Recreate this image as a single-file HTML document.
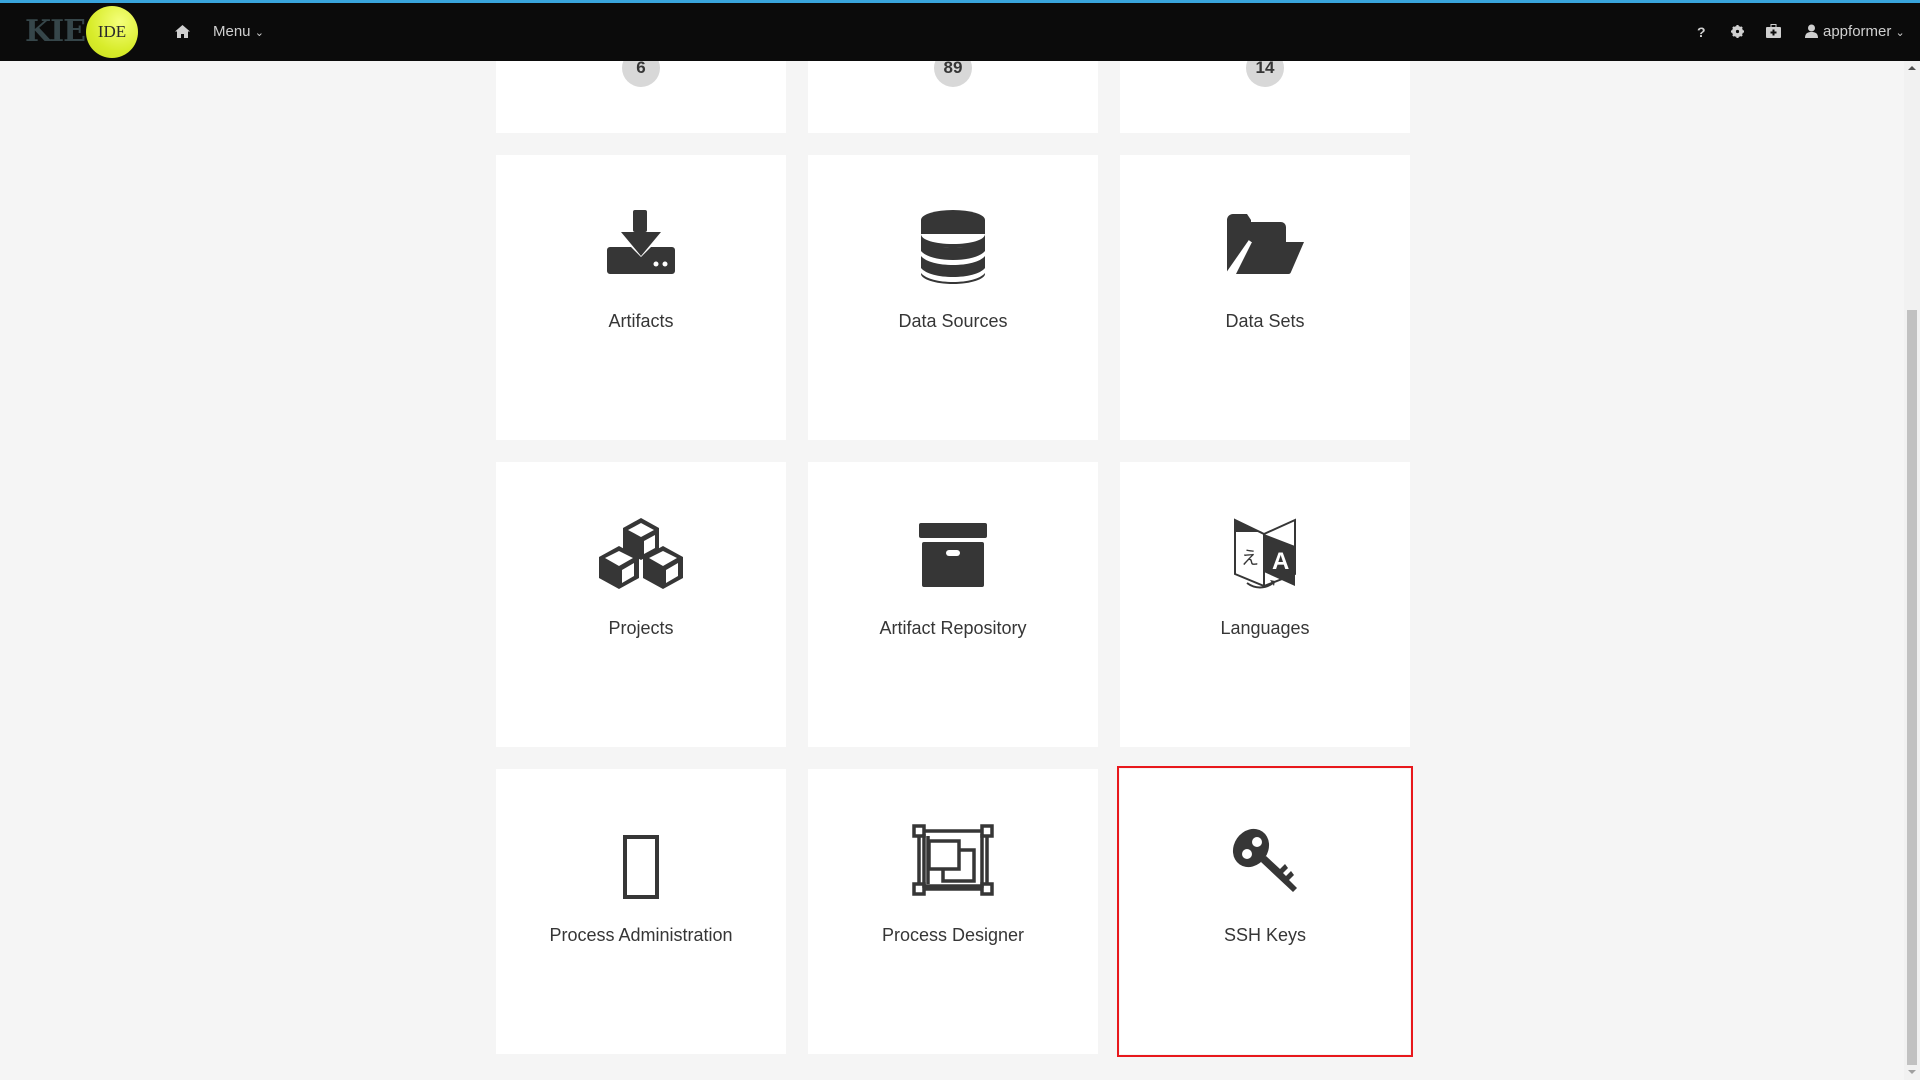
<!DOCTYPE html>
<html><head><meta charset="utf-8"><style>
*{margin:0;padding:0;box-sizing:border-box}
body{width:1920px;height:1080px;overflow:hidden;background:#f5f5f5;font-family:"Liberation Sans",sans-serif;position:relative}
.top{position:absolute;left:0;top:0;width:1920px;height:3px;background:#39a5dc;z-index:5}
.nav{position:absolute;left:0;top:3px;width:1920px;height:58px;background:#0b0b0b;z-index:5}
.card{position:absolute;width:290px;height:285px;background:#fff}
.lbl{position:absolute;left:0;width:100%;text-align:center;font-size:18px;color:#363636;top:156px}
.ic{position:absolute;left:0;width:100%;display:flex;justify-content:center}
.badge{position:absolute;width:38px;height:38px;border-radius:50%;background:#d8d8d8;left:126px;top:-38px;text-align:center;line-height:38px;font-weight:bold;font-size:17px;color:#363636}
.navt{position:absolute;color:#d0d0d0;font-size:15px}
</style></head><body>
<div class="top"></div>
<div class="nav">
 <div style="position:absolute;left:25px;top:11px;font-family:'DejaVu Serif',serif;font-size:30px;color:#36464a;font-weight:bold;letter-spacing:-1px">KIE</div>
 <div style="position:absolute;left:86px;top:3px;width:52px;height:52px;border-radius:50%;background:radial-gradient(circle at 65% 30%,#f4ff7a,#d8ec2a 60%,#c9dc20);font-family:'Liberation Serif',serif;font-size:17px;color:#2a2a2a;text-align:center;line-height:52px">IDE</div>
 <svg style="position:absolute;left:175px;top:22px" width="15" height="13" viewBox="0 0 15 13"><path d="M7.5 0L0 6.5h2V13h4V9h3v4h4V6.5h2z" fill="#d0d0d0"/></svg>
 <div class="navt" style="left:213px;top:20px">Menu <span style="font-size:11px">&#8964;</span></div>
 <div class="navt" style="left:1697px;top:21px;font-weight:bold;font-size:14px">?</div>
 <svg style="position:absolute;left:1731px;top:22px" width="13" height="13" viewBox="0 0 13 13"><circle cx="6.5" cy="6.5" r="4" fill="none" stroke="#d0d0d0" stroke-width="3"/><path d="M6.5 0v13M0 6.5h13M2 2l9 9M11 2l-9 9" stroke="#d0d0d0" stroke-width="2.2"/><circle cx="6.5" cy="6.5" r="1.6" fill="#0b0b0b"/></svg>
 <svg style="position:absolute;left:1766px;top:21px" width="15" height="14" viewBox="0 0 15 14"><rect x="0" y="3" width="15" height="11" rx="1" fill="#d0d0d0"/><rect x="5" y="0.5" width="5" height="3" fill="none" stroke="#d0d0d0"/><path d="M7.5 5.5v6M4.5 8.5h6" stroke="#0b0b0b" stroke-width="2"/></svg>
 <svg style="position:absolute;left:1805px;top:21px" width="13" height="14" viewBox="0 0 13 14"><circle cx="6.5" cy="4" r="3.5" fill="#d0d0d0"/><path d="M0 14c0-5 3-6 6.5-6S13 9 13 14z" fill="#d0d0d0"/></svg>
 <div class="navt" style="left:1823px;top:20px">appformer <span style="font-size:11px">&#8964;</span></div>
</div>

<div class="card" style="left:496px;top:61px;height:72px"><div class="badge" style="top:-12px">6</div></div>
<div class="card" style="left:808px;top:61px;height:72px"><div class="badge" style="top:-12px">89</div></div>
<div class="card" style="left:1120px;top:61px;height:72px"><div class="badge" style="top:-12px">14</div></div>

<div class="card" style="left:496px;top:155px"><div class="ic" style="top:55px">
<svg width="68" height="64" viewBox="0 0 68 64"><rect x="26" y="0" width="14" height="22" rx="2" fill="#363636"/><path d="M14 22h40L34 46z" fill="#363636"/><path d="M0 40a3 3 0 0 1 3-3h21l10 10 10-10h21a3 3 0 0 1 3 3v21a3 3 0 0 1-3 3H3a3 3 0 0 1-3-3z" fill="#363636"/><circle cx="49" cy="54" r="2.5" fill="#fff"/><circle cx="58" cy="54" r="2.5" fill="#fff"/></svg></div><div class="lbl">Artifacts</div></div>
<div class="card" style="left:808px;top:155px"><div class="ic" style="top:55px">
<svg width="64" height="74" viewBox="0 0 64 74"><ellipse cx="32" cy="10" rx="32" ry="10" fill="#363636"/><rect x="0" y="10" width="64" height="14" fill="#363636"/><path d="M0 24c0 6 14 10 32 10s32-4 32-10v5c0 6-14 9-32 9S0 35 0 29z" fill="#363636"/><path d="M0 29c5 6 18 9 32 9s27-3 32-9v12c-5 6-18 9-32 9S5 47 0 41z" fill="#363636"/><path d="M0 46c5 6 18 9 32 9s27-3 32-9v12c-5 6-18 9-32 9S5 64 0 58z" fill="#363636"/><path d="M0 63c5 6 18 9 32 9s27-3 32-9v1c0 5-14 10-32 10S0 69 0 64z" fill="#363636"/></svg></div><div class="lbl">Data Sources</div></div>
<div class="card" style="left:1120px;top:155px"><div class="ic" style="top:59px">
<svg width="77" height="60" viewBox="0 0 77 60"><path d="M0 60V6a6 6 0 0 1 6-6h14l4 6v2h30a5 5 0 0 1 5 5v15H24z" fill="#363636"/><path d="M25 28h52L64 58a3 3 0 0 1-3 2H9z" fill="#363636"/><path d="M0 60L23 27" stroke="#fff" stroke-width="3"/></svg></div><div class="lbl">Data Sets</div></div>

<div class="card" style="left:496px;top:462px"><div class="ic" style="top:55px">
<svg width="88" height="72" viewBox="0 0 88 72">
<g fill="#363636"><path d="M44 1l18 10v22l-18 10-18-10V11z"/><path d="M22 29l20 11v21L22 72 2 61V40z"/><path d="M66 29l20 11v21L66 72 46 61V40z"/></g>
<g fill="#fff"><path d="M44 6l13 7-13 7-13-7z"/><path d="M47 24l11-6v13l-11 6z"/>
<path d="M22 34l14 7-14 8-14-8z"/><path d="M25 53l12-7v13l-12 7z"/>
<path d="M66 34l14 7-14 8-14-8z"/><path d="M69 53l12-7v13l-12 7z"/></g></svg></div><div class="lbl">Projects</div></div>
<div class="card" style="left:808px;top:462px"><div class="ic" style="top:61px">
<svg width="68" height="64" viewBox="0 0 68 64"><rect x="0" y="0" width="68" height="15" rx="2" fill="#363636"/><rect x="3" y="19" width="62" height="45" rx="2" fill="#363636"/><rect x="27" y="27" width="14" height="6" rx="3" fill="#fff"/></svg></div><div class="lbl">Artifact Repository</div></div>
<div class="card" style="left:1120px;top:462px"><div class="ic" style="top:55px">
<svg width="64" height="74" viewBox="0 0 64 74"><path d="M2 3l29 14v52L2 57z" fill="none" stroke="#363636" stroke-width="2"/><path d="M2 3l27 12-27 0z" fill="#363636"/><path d="M31 17l31-14v54L31 69z" fill="#fff" stroke="#363636" stroke-width="2"/><path d="M31 17l31 12v40L31 55z" fill="#363636"/><text x="39" y="52" font-family="Liberation Sans" font-weight="bold" font-size="24" fill="#fff">A</text><text x="8" y="47" font-family="Noto Sans CJK JP,sans-serif" font-size="18" fill="#363636">え</text><path d="M14 66c8 6 18 6 26 0" fill="none" stroke="#363636" stroke-width="2"/><path d="M37 63l5 1-1 5z" fill="#363636"/></svg></div><div class="lbl">Languages</div></div>

<div class="card" style="left:496px;top:769px"><div class="ic" style="top:66px">
<svg width="36" height="64" viewBox="0 0 36 64"><rect x="2" y="2" width="32" height="60" fill="none" stroke="#363636" stroke-width="4"/></svg></div><div class="lbl">Process Administration</div></div>
<div class="card" style="left:808px;top:769px"><div class="ic" style="top:55px">
<svg width="82" height="72" viewBox="0 0 82 72"><g fill="none" stroke="#363636" stroke-width="3.5"><rect x="2" y="2" width="10" height="10"/><rect x="70" y="2" width="10" height="10"/><rect x="2" y="60" width="10" height="10"/><rect x="70" y="60" width="10" height="10"/><path d="M12 7h58M12 65h58M7 12v48M75 12v48"/><path d="M12 10v52h58V10M16 12v48"/><rect x="17" y="17" width="30" height="28"/><path d="M47 26h15v31H31V45"/></g></svg></div><div class="lbl">Process Designer</div></div>
<div class="card" style="left:1120px;top:769px"><div class="ic" style="top:59px">
<svg width="68" height="66" viewBox="0 0 68 66"><ellipse cx="20" cy="20" rx="17" ry="20" fill="#363636" transform="rotate(35 20 20)"/><circle cx="26" cy="14" r="5" fill="#fff"/><circle cx="16" cy="26" r="5" fill="#fff"/><path d="M30 34l32 30 4-4-8-8 5-5-3-4-5 5-3-3 5-5-3-4-5 5-14-13z" fill="#363636"/></svg></div><div class="lbl">SSH Keys</div></div>
<div style="position:absolute;left:1117px;top:766px;width:296px;height:291px;border:2px solid #e8181c"></div>

<div style="position:absolute;left:1904px;top:61px;width:16px;height:1019px;background:#f1f1f1"></div>
<div style="position:absolute;left:1907px;top:310px;width:10px;height:755px;background:#c1c1c1"></div>
<div style="position:absolute;left:1908px;top:66px;width:0;height:0;border-left:4px solid transparent;border-right:4px solid transparent;border-bottom:4px solid #505050"></div>
<div style="position:absolute;left:1908px;top:1070px;width:0;height:0;border-left:4px solid transparent;border-right:4px solid transparent;border-top:4px solid #a0a0a0"></div>
</body></html>
